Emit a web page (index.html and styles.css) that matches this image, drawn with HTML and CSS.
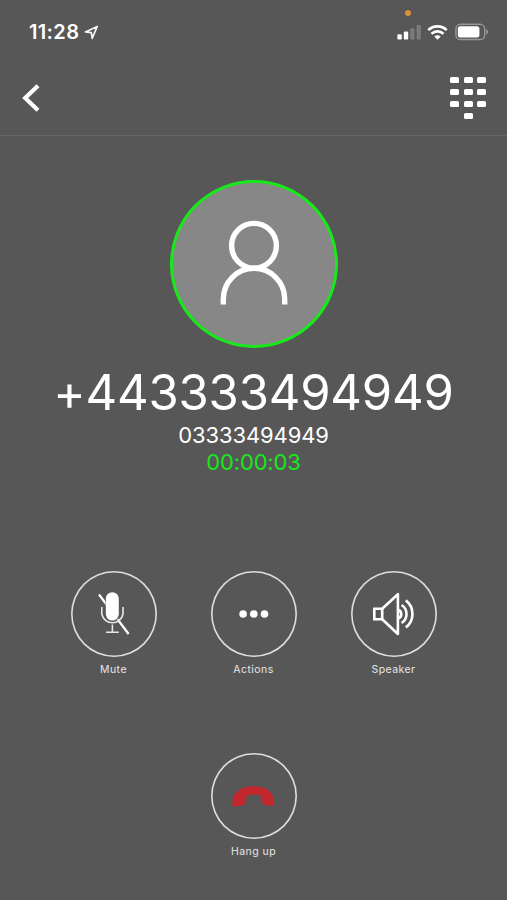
FILE: index.html
```html
<!DOCTYPE html>
<html lang="en">
<head>
  <meta charset="UTF-8" />
  <meta name="viewport" content="width=device-width, initial-scale=1" />
  <title>Call</title>
  <link rel="stylesheet" href="styles.css">
</head>
<body>
  <div class="status-bar">
    <div class="status-left">
      <span class="clock">11:28</span>
      <svg class="location" width="15" height="15" viewBox="0 0 15 15">
        <path d="M1.4 6.9 L13.2 1.4 L8.2 13.4 L7.3 7.6 Z" fill="none" stroke="#f4f4f4" stroke-width="1.7" stroke-linejoin="round" />
      </svg>
    </div>
    <div class="status-right">
      <span class="recording-dot"></span>
      <svg width="24" height="16" viewBox="0 0 24 16">
        <rect x="0.4" y="10.2" width="4.4" height="5.4" rx="1.2" fill="#fff" />
        <rect x="6.8" y="7.4" width="4.4" height="8.2" rx="1.2" fill="#fff" />
        <rect x="13.2" y="4.2" width="4.2" height="11.4" rx="1.2" fill="#7b7b7b" />
        <rect x="19.6" y="1.1" width="4.2" height="14.5" rx="1.2" fill="#7b7b7b" />
      </svg>
      <svg class="wifi" width="21" height="16" viewBox="0 0 21 16">
        <g fill="none" stroke="#fff" stroke-width="2.7">
          <path d="M1.3 6.1 A13 13 0 0 1 19.7 6.1" />
          <path d="M4.5 9.9 A8.5 8.5 0 0 1 16.5 9.9" />
        </g>
        <path d="M7.3 12.6 A4.6 4.6 0 0 1 13.7 12.6 L10.5 15.8 Z" fill="#fff" />
      </svg>
      <svg class="battery" width="34" height="18" viewBox="0 0 34 18">
        <rect x="0.9" y="1.3" width="28.8" height="15.2" rx="4.6" fill="none" stroke="#979797" stroke-width="1.4" />
        <rect x="2.8" y="3.3" width="21.6" height="11.2" rx="2.5" fill="#fff" />
        <path d="M31.2 6.3 C33.6 7 33.6 10.8 31.2 11.5 Z" fill="#979797" />
      </svg>
    </div>
  </div>

  <div class="navbar">
    <svg width="18" height="28" viewBox="0 0 18 28">
      <path d="M16 1.8 L3.2 14 L16 26.2" fill="none" stroke="#fff" stroke-width="4.2" />
    </svg>
    <div class="keypad">
      <span></span><span></span><span></span>
      <span></span><span></span><span></span>
      <span></span><span></span><span></span>
      <span class="zero"></span>
    </div>
  </div>

  <div class="caller">
    <div class="avatar">
      <svg width="70" height="86" viewBox="0 0 70 86">
        <g fill="none" stroke="#fff" stroke-width="5.4">
          <circle cx="35" cy="25.8" r="22.4" />
          <path d="M4.3 84.4 V79 A30.7 30.7 0 0 1 65.7 79 V84.4" />
        </g>
      </svg>
    </div>
    <div class="number">+443333494949</div>
    <div class="line">03333494949</div>
    <div class="timer">00:00:03</div>
  </div>

  <div class="controls">
    <div class="control">
      <div class="circle">
        <svg width="86" height="86" viewBox="0 0 86 86">
          <path d="M28 23.5 L57.6 63" stroke="#fff" stroke-width="2.2" />
          <rect x="34.5" y="20.5" width="14" height="30" rx="7" fill="#575757" />
          <rect x="34.8" y="21.2" width="13" height="28.4" rx="6.5" fill="#fff" />
          <path d="M30.8 36 V43 A10.8 10.8 0 0 0 52 43 V36 M41.4 53.5 V61 M35 61.2 H47.8" fill="none" stroke="#e8e8e8" stroke-width="1.6" />
        </svg>
      </div>
      <div class="label">Mute</div>
    </div>
    <div class="control">
      <div class="circle">
        <svg width="86" height="86" viewBox="0 0 86 86">
          <g fill="#fff">
            <circle cx="32.1" cy="43" r="3.8" />
            <circle cx="42.8" cy="43" r="3.8" />
            <circle cx="53.5" cy="43" r="3.8" />
          </g>
        </svg>
      </div>
      <div class="label">Actions</div>
    </div>
    <div class="control">
      <div class="circle">
        <svg width="86" height="86" viewBox="0 0 86 86">
          <g fill="none" stroke="#fff" stroke-width="2.6">
            <path d="M23.3 37.8 H31.2 V48.3 H23.3 Z" />
            <path d="M31.2 37.8 L46.9 23.2 V63 L31.2 48.3" stroke-linejoin="round" />
            <path d="M47 38.8 A4.6 4.6 0 0 1 47 47.6" />
            <path d="M50.6 34 A10.7 10.7 0 0 1 50.6 52" />
            <path d="M54.8 29.4 A17 17 0 0 1 54.8 56.4" />
          </g>
        </svg>
      </div>
      <div class="label">Speaker</div>
    </div>
  </div>

  <div class="controls hangup">
    <div class="control">
      <div class="circle">
        <svg width="86" height="86" viewBox="0 0 86 86">
          <path d="M21.3 50.3 C21.5 39.5 29 33.2 42.8 33.2 C56 33.2 63 39.5 63.4 49.5 C63.6 52.2 62.4 53.3 60.4 53 L54.4 52.1 C52.6 51.8 51.4 51 51.2 49 L50.7 43 C48.5 41.2 38 41.2 35.6 43 L35 49 C34.8 51 33.6 52 32 52.3 L24.6 53.6 C22.2 54 21.2 53 21.3 50.3 Z" fill="#c1272d" />
        </svg>
      </div>
      <div class="label">Hang up</div>
    </div>
  </div>
</body>
</html>
```

FILE: styles.css
```css
* {
  box-sizing: border-box;
}

body {
  margin: 0;
  height: 900px;
  background-color: #575757;
  color: #fff;
  font-family: Inter, "Liberation Sans", sans-serif;
  overflow: hidden;
}

svg {
  display: block;
}

.status-bar {
  display: flex;
  justify-content: space-between;
  align-items: center;
  height: 64px;
  padding: 0 18px 0 29px;
}

.status-left,
.status-right {
  display: flex;
  align-items: center;
}

.status-right {
  position: relative;
}

.clock {
  font-size: 20px;
  font-weight: 600;
  line-height: 24px;
  letter-spacing: 0.35px;
}

.location {
  margin-left: 5px;
}

.wifi {
  margin-left: 6px;
}

.battery {
  margin-left: 7px;
}

.recording-dot {
  position: absolute;
  top: -13px;
  left: 8px;
  width: 6px;
  height: 6px;
  border-radius: 50%;
  background-color: #d9913a;
}

.navbar {
  display: flex;
  justify-content: space-between;
  align-items: flex-start;
  height: 72px;
  padding: 13px 21px 0 22px;
  border-bottom: 1px solid #656565;
}

.navbar > svg {
  margin-top: 7px;
}

.keypad {
  display: grid;
  grid-template-columns: repeat(3, 9px);
  gap: 6px 4.5px;
}

.keypad span {
  height: 6px;
  border-radius: 1.5px;
  background-color: #fff;
}

.keypad .zero {
  grid-column: 2;
}

.caller {
  display: flex;
  flex-direction: column;
  align-items: center;
  padding-top: 44px;
}

.avatar {
  display: flex;
  justify-content: center;
  width: 168px;
  height: 168px;
  padding-top: 37px;
  border: 3px solid #18e81c;
  border-radius: 50%;
  background-color: #878787;
}

.number {
  margin-top: 15px;
  font-size: 49px;
  line-height: 60px;
  letter-spacing: -0.2px;
}

.line {
  margin-top: -1px;
  font-size: 22px;
  line-height: 27px;
  letter-spacing: -0.1px;
}

.timer {
  color: #18e81c;
  font-size: 22px;
  line-height: 27px;
  letter-spacing: -0.15px;
}

.controls {
  display: flex;
  justify-content: center;
  gap: 54px;
  margin-top: 95px;
}

.control {
  width: 86px;
}

.circle {
  height: 86px;
  border-radius: 50%;
  box-shadow: inset 0 0 0 1.6px #dedede;
}

.label {
  margin-top: 5px;
  color: #e6e6e6;
  font-size: 10.5px;
  line-height: 16px;
  text-align: center;
  letter-spacing: 0.45px;
}

.hangup {
  margin-top: 75px;
}
```
